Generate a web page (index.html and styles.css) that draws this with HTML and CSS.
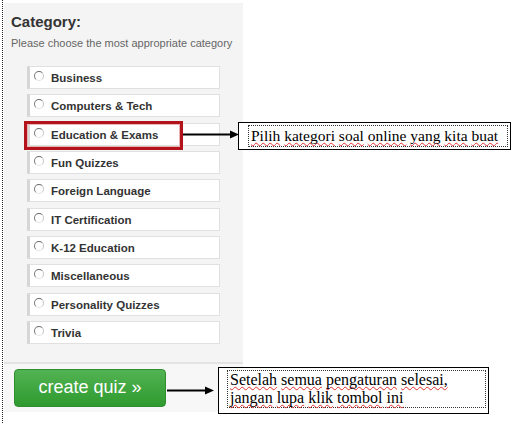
FILE: index.html
```html
<!DOCTYPE html>
<html>
<head>
<meta charset="utf-8">
<link rel="stylesheet" href="styles.css">
</head>
<body>
<div class="page">
  <div class="panel">
    <div class="panel-body">
      <h2 class="title">Category:</h2>
      <p class="hint">Please choose the most appropriate category</p>
      <ul class="cats">
        <li class="cat"><span class="radio"></span><span class="label">Business</span></li>
        <li class="cat"><span class="radio"></span><span class="label">Computers &amp; Tech</span></li>
        <li class="cat"><span class="radio"></span><span class="label">Education &amp; Exams</span></li>
        <li class="cat"><span class="radio"></span><span class="label">Fun Quizzes</span></li>
        <li class="cat"><span class="radio"></span><span class="label">Foreign Language</span></li>
        <li class="cat"><span class="radio"></span><span class="label">IT Certification</span></li>
        <li class="cat"><span class="radio"></span><span class="label">K-12 Education</span></li>
        <li class="cat"><span class="radio"></span><span class="label">Miscellaneous</span></li>
        <li class="cat"><span class="radio"></span><span class="label">Personality Quizzes</span></li>
        <li class="cat"><span class="radio"></span><span class="label">Trivia</span></li>
      </ul>
    </div>
    <div class="actions">
      <button class="create">create quiz »</button>
    </div>
  </div>

  <div class="highlight"></div>

  <svg class="arrow arrow-1" width="56" height="9" viewBox="0 0 56 9">
    <line x1="0" y1="4.5" x2="49" y2="4.5" stroke="#000" stroke-width="2"/>
    <polygon points="47,0.5 56,4.5 47,8.5" fill="#000"/>
  </svg>
  <div class="note note-1">
    <div class="note-text"><span class="sp">Pilih</span> <span class="sp">kategori</span> <span class="sp">soal</span> <span class="sp">online</span> <span class="sp">yang</span> <span class="sp">kita</span> <span class="sp">buat</span></div>
  </div>

  <svg class="arrow arrow-2" width="47" height="9" viewBox="0 0 47 9">
    <line x1="0" y1="4.5" x2="40" y2="4.5" stroke="#000" stroke-width="2"/>
    <polygon points="38,0.5 47,4.5 38,8.5" fill="#000"/>
  </svg>
  <div class="note note-2">
    <div class="note-text"><span class="sp">Setelah</span> <span class="sp">semua</span> <span class="sp">pengaturan</span> <span class="sp">selesai,</span><br><span class="sp">jangan</span> <span class="sp">lupa</span> <span class="sp">klik</span> <span class="sp">tombol</span> <span class="sp">ini</span></div>
  </div>
</div>
</body>
</html>
```

FILE: styles.css
```css
html, body {
  margin: 0;
  padding: 0;
  background: #ffffff;
}

.page {
  position: relative;
  height: 423px;
  padding-left: 4px;
  padding-top: 3px;
  box-sizing: border-box;
  font-family: "Liberation Sans", Arial, sans-serif;
}

.page::before {
  content: "";
  position: absolute;
  left: 2px;
  top: 0;
  bottom: 0;
  border-left: 1px dotted #222;
}

.panel {
  width: 239px;
}

.panel-body {
  background: #f4f4f4;
  padding: 10px 0 18px 7px;
}

.title {
  margin: 0;
  font-size: 15px;
  line-height: 18px;
  font-weight: bold;
  color: #333333;
}

.hint {
  margin: 6px 0 0;
  font-size: 11px;
  line-height: 13px;
  color: #666666;
}

.cats {
  list-style: none;
  margin: 16px 0 0 16px;
  padding: 0;
  display: flex;
  flex-direction: column;
  gap: 5.33px;
}

.cat {
  width: 193px;
  height: 23px;
  box-sizing: border-box;
  background: #ffffff;
  border: 1px solid #e0e0e0;
  border-left: 3px solid #d6d6d6;
  display: flex;
  align-items: center;
  padding-left: 4px;
}

.radio {
  width: 10px;
  height: 10px;
  box-sizing: border-box;
  border-radius: 50%;
  border: 1px solid;
  border-color: #6a6a6a #c4c4c4 #e2e2e2 #7a7a7a;
  background: #ffffff;
  margin-top: -3px;
  margin-right: 7px;
  flex: none;
}

.label {
  font-size: 11.5px;
  font-weight: bold;
  color: #333333;
  padding-top: 1px;
}

.actions {
  border-top: 2px solid #e3e3e3;
  background: #f7f7f7;
  padding: 5px 0 5px 10px;
}

.create {
  display: block;
  width: 152px;
  height: 38px;
  border: 1px solid #2f8f2f;
  border-radius: 4px;
  background: linear-gradient(#52b352, #2f9a2f);
  color: #ffffff;
  font-family: "Liberation Sans", Arial, sans-serif;
  font-size: 18px;
  padding: 0;
}

.highlight {
  position: absolute;
  left: 24px;
  top: 121px;
  width: 159px;
  height: 29px;
  box-sizing: border-box;
  border: 3px solid #b3141c;
  box-shadow: inset 0 0 0 1px #e8b4b6;
}

.arrow {
  position: absolute;
  display: block;
}

.arrow-1 {
  left: 183px;
  top: 130px;
}

.arrow-2 {
  left: 167px;
  top: 386px;
}

.note {
  position: absolute;
  background: #ffffff;
  border: 1px solid #000000;
  box-sizing: border-box;
  font-family: "Liberation Serif", "Times New Roman", serif;
  font-size: 16px;
  color: #000000;
}

.note-text {
  border: 1px dotted #333;
  padding: 0 2px;
  white-space: nowrap;
}

.sp {
  text-decoration: underline wavy #e03030;
  text-decoration-thickness: 1px;
  text-decoration-skip-ink: none;
  text-underline-offset: 1px;
}

.note-1 {
  left: 238px;
  top: 122px;
  width: 273px;
  height: 28px;
  padding: 2px 2px 2px 9px;
  line-height: 20px;
  font-size: 15.5px;
}

.note-2 {
  left: 218px;
  top: 367px;
  width: 271px;
  height: 47px;
  padding: 2px 2px 2px 8px;
  line-height: 18px;
}
```
